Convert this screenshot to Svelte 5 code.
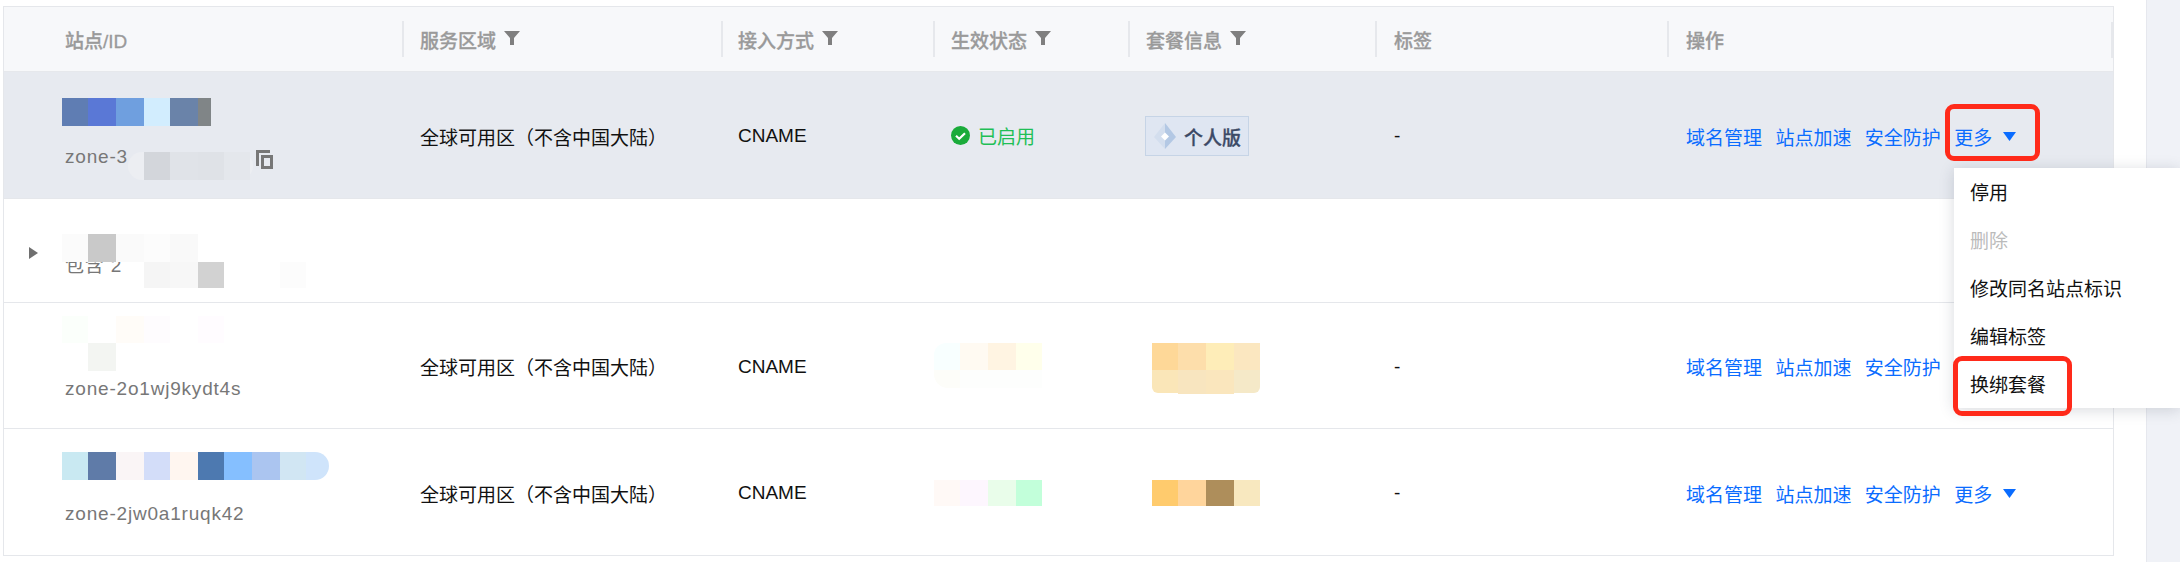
<script>
  const ORIGIN_X = 4;

  // censor mosaics, page x and y relative to the row they sit on
  const rows = [
    {
      id: "r1",
      top: 72,
      active: true,
      name: "zone-3",
      copy: true,
      region: "全球可用区（不含中国大陆）",
      access: "CNAME",
      status: "on",
      plan: "个人版",
      more: true,
      blocks: [
        [128, 152, 125, 28, "#eceef2", "14px"],
        [62, 98, 26, 28, "#5f7db3"],
        [88, 98, 28, 28, "#5a78d6"],
        [116, 98, 28, 28, "#6f9fdf"],
        [144, 98, 26, 28, "#d2edfe"],
        [170, 98, 28, 28, "#6a83a9"],
        [198, 98, 13, 28, "#808587"],
        [144, 152, 26, 28, "#d3d6db"],
        [170, 152, 28, 28, "#e0e3e8"],
        [198, 152, 26, 28, "#dfe2e7"],
        [224, 152, 26, 28, "#e4e7ec"],
      ],
    },
    {
      id: "r2",
      top: 199,
      expand: true,
      name: "包含 2",
      blocks: [
        [62, 234, 26, 28, "#fbfbfb"],
        [88, 234, 28, 28, "#c9c9c9"],
        [116, 234, 28, 28, "#fafafa"],
        [144, 234, 26, 28, "#fcfcfc"],
        [170, 234, 28, 28, "#f9f9f9"],
        [144, 262, 26, 26, "#f5f5f5"],
        [170, 262, 28, 26, "#f7f7f7"],
        [198, 262, 26, 26, "#d2d2d2"],
        [280, 262, 26, 26, "#fcfcfc"],
      ],
    },
    {
      id: "r3",
      top: 303,
      name: "zone-2o1wj9kydt4s",
      region: "全球可用区（不含中国大陆）",
      access: "CNAME",
      more: true,
      blocks: [
        [62, 316, 26, 27, "#fbfffb"],
        [116, 316, 28, 27, "#fffcf8"],
        [144, 316, 26, 27, "#fefcfe"],
        [198, 316, 26, 27, "#fffcff"],
        [88, 343, 28, 28, "#f3f5f2"],
        [934, 343, 26, 27, "#f8ffff", "12px 0 0 0"],
        [960, 343, 28, 27, "#fffaf2"],
        [988, 343, 28, 27, "#fff4e2"],
        [1016, 343, 26, 27, "#ffffeb"],
        [934, 370, 26, 18, "#fdfdf9", "0 0 0 14px"],
        [960, 370, 82, 18, "#fdfefd"],
        [1152, 343, 26, 27, "#fed898"],
        [1178, 343, 28, 27, "#fddeab"],
        [1206, 343, 28, 27, "#feedb8"],
        [1234, 343, 26, 27, "#fbe7c0"],
        [1152, 370, 26, 23, "#fae6b8", "0 0 0 6px"],
        [1178, 370, 28, 24, "#f8e5bf"],
        [1206, 370, 28, 24, "#fae6bd"],
        [1234, 370, 26, 23, "#f5e9c8", "0 0 6px 0"],
      ],
    },
    {
      id: "r4",
      top: 429,
      name: "zone-2jw0a1ruqk42",
      region: "全球可用区（不含中国大陆）",
      access: "CNAME",
      more: true,
      showMore: true,
      blocks: [
        [62, 452, 26, 28, "#c9e9f2"],
        [88, 452, 28, 28, "#5f7ba8"],
        [116, 452, 28, 28, "#faf5f6"],
        [144, 452, 26, 28, "#d3ddf9"],
        [170, 452, 28, 28, "#fff6f0"],
        [198, 452, 26, 28, "#4d79b0"],
        [224, 452, 28, 28, "#85bfff"],
        [252, 452, 28, 28, "#abc5f0"],
        [280, 452, 26, 28, "#d1e6f3"],
        [306, 452, 23, 28, "#cfe4fb", "0 14px 14px 0"],
        [934, 480, 26, 26, "#fff9f6"],
        [960, 480, 28, 26, "#fdf6fe"],
        [988, 480, 28, 26, "#e9fdea"],
        [1016, 480, 26, 26, "#c2ffda"],
        [1152, 480, 26, 26, "#ffcb6d"],
        [1178, 480, 28, 26, "#ffd59c"],
        [1206, 480, 28, 26, "#ae8e5b"],
        [1234, 480, 26, 26, "#f8e8bf"],
      ],
    },
  ];

  const headers = [
    { label: "服务区域", filter: true },
    { label: "接入方式", filter: true },
    { label: "生效状态", filter: true },
    { label: "套餐信息", filter: true },
    { label: "标签" },
    { label: "操作" },
  ];

  const actions = ["域名管理", "站点加速", "安全防护"];
  const menu = [
    { label: "停用" },
    { label: "删除", disabled: true },
    { label: "修改同名站点标识" },
    { label: "编辑标签" },
    { label: "换绑套餐" },
  ];

  function blockStyle(b, top) {
    return `left:${b[0] - ORIGIN_X}px;top:${b[1] - top}px;width:${b[2]}px;height:${b[3]}px;background:${b[4]};border-radius:${b[5] || 0}`;
  }
</script>

<div class="page">
  <main class="main">
    <div class="table">
      <div class="grid head">
        <div class="hcell first">站点/ID</div>
        {#each headers as h}
          <div class="hcell">
            {h.label}
            {#if h.filter}
              <svg class="filter" viewBox="0 0 16 14" width="16" height="14">
                <path d="M0 0h16L10 7v7H6V7z" fill="#7f7f7f" />
              </svg>
            {/if}
          </div>
        {/each}
        <span class="end-rule"></span>
      </div>

      {#each rows as row}
        <div class="grid row {row.id}" class:active={row.active}>
          <div class="cell site">
            {#if row.expand}
              <svg class="caret" viewBox="0 0 9 12" width="9" height="12">
                <path d="M0 0l9 6-9 6z" fill="#6f6f6f" />
              </svg>
            {/if}
            <span class="zone">{row.name}</span>
            {#if row.copy}
              <svg class="copy" viewBox="0 0 17 19" width="17" height="19">
                <path d="M0 0h14v3H3v13H0z" fill="#777" />
                <path fill-rule="evenodd" d="M5 5h12v14H5zM8 8v8h6V8z" fill="#777" />
              </svg>
            {/if}
          </div>
          <div class="cell">{row.region || ""}</div>
          <div class="cell">{row.access || ""}</div>
          <div class="cell">
            {#if row.status}
              <span class="status">
                <svg viewBox="0 0 19 19" width="19" height="19">
                  <circle cx="9.5" cy="9.5" r="9.5" fill="#1aab3a" />
                  <path d="M5 9.8l3.2 3 5.8-5.6" fill="none" stroke="#fff" stroke-width="2.2" />
                </svg>
                已启用
              </span>
            {/if}
          </div>
          <div class="cell">
            {#if row.plan}
              <span class="plan">
                <svg viewBox="0 0 22 26" width="22" height="26">
                  <path d="M11 0v26L0 14z" fill="#d3deee" />
                  <path d="M11 0l11 14-11 12z" fill="#b3c8e4" />
                  <path d="M11 9.5l4 4-4 4-4-4z" fill="#fff" />
                </svg>
                {row.plan}
              </span>
            {/if}
          </div>
          <div class="cell">{row.region ? "-" : ""}</div>
          <div class="cell actions">
            {#if row.region}
              {#each actions as a}
                <a href="#top">{a}</a>
              {/each}
              <a class="more" href="#top">
                更多
                <svg viewBox="0 0 13 9" width="13" height="9"><path d="M0 0h13L6.5 9z" fill="#0a6cff" /></svg>
              </a>
            {/if}
          </div>
          {#each row.blocks as b}
            <i class="block" style={blockStyle(b, row.top)}></i>
          {/each}
        </div>
      {/each}
    </div>
  </main>
  <aside class="side"></aside>

  <ul class="menu">
    {#each menu as item}
      <li class:disabled={item.disabled}>{item.label}</li>
    {/each}
  </ul>

  <span class="mark mark-more"></span>
  <span class="mark mark-rebind"></span>
</div>

<style>
  :global(body) {
    margin: 0;
    background: #fff;
    overflow: hidden;
  }

  .page {
    position: relative;
    display: flex;
    width: 2180px;
    height: 562px;
    overflow: hidden;
    font-family: "Liberation Sans", "Noto Sans CJK SC", sans-serif;
    font-size: 19px;
    color: #111;
  }

  .main {
    width: 2146px;
    padding: 6px 0 0 3px;
    box-sizing: border-box;
  }

  .side {
    flex: 1;
    background: #f0f2f7;
    border-left: 1px solid #e6e8ee;
  }

  .table {
    width: 2111px;
    border: 1px solid #e5e7eb;
    box-sizing: border-box;
    height: 550px;
  }

  .grid {
    position: relative;
    display: grid;
    grid-template-columns: 398px 319px 212px 195px 247px 292px 1fr;
    align-items: center;
    box-sizing: border-box;
  }

  .head {
    height: 65px;
    background: #f7f8fa;
    border-bottom: 1px solid #e6e8ec;
  }

  .hcell {
    display: flex;
    align-items: center;
    gap: 8px;
    height: 36px;
    padding-left: 16px;
    border-left: 2px solid #e6e8ec;
    color: #9a9a9a;
    font-weight: 500;
    -webkit-text-stroke: 0.3px #9a9a9a;
  }

  .hcell.first {
    border-left: none;
    padding-left: 61px;
  }

  .hcell:nth-child(3) { padding-left: 15px; }
  .hcell:nth-child(6),
  .hcell:nth-child(7) { padding-left: 17px; }

  .filter {
    margin-top: -2px;
  }

  .end-rule {
    position: absolute;
    right: 0;
    top: 15px;
    height: 36px;
    border-right: 2px solid #e6e8ec;
  }

  .row {
    border-bottom: 1px solid #e5e7eb;
  }

  .r1 { height: 127px; }
  .r2 { height: 104px; }
  .r3 { height: 126px; }
  .r4 { height: 126px; border-bottom: none; }

  .row.active {
    background: #e7eaf0;
  }

  .cell {
    padding-left: 18px;
    padding-top: 2px;
    white-space: nowrap;
  }

  .cell:nth-child(3) { padding-left: 17px; }
  .cell:nth-child(6),
  .cell:nth-child(7) { padding-left: 19px; }

  .site {
    position: relative;
    display: flex;
    align-items: center;
    align-self: start;
    padding-left: 61px;
    color: #777;
    letter-spacing: 0.8px;
  }

  .r1 .site { padding-top: 74px; }
  .r2 .site { padding-top: 51px; }
  .r3 .site { padding-top: 75px; }
  .r4 .site { padding-top: 74px; }

  .caret {
    position: absolute;
    left: 25px;
    top: 48px;
  }

  .copy {
    position: absolute;
    left: 252px;
    top: 78px;
  }

  .status {
    display: inline-flex;
    align-items: center;
    gap: 8px;
    color: #1fbf56;
  }

  .plan {
    display: inline-flex;
    align-items: center;
    gap: 8px;
    height: 40px;
    width: 104px;
    padding-left: 8px;
    margin-left: -1px;
    box-sizing: border-box;
    background: #dfe6f2;
    border: 1px solid #c6d4e6;
    color: #3c4a66;
    font-weight: 500;
    -webkit-text-stroke: 0.3px #3c4a66;
  }

  .actions {
    display: flex;
    align-items: center;
    gap: 13.4px;
  }

  .actions a {
    color: #0a6cff;
    text-decoration: none;
  }

  .more {
    display: inline-flex;
    align-items: center;
    gap: 11px;
  }

  .block {
    position: absolute;
    display: block;
  }

  .menu {
    position: absolute;
    left: 1954px;
    top: 168px;
    width: 226px;
    margin: 0;
    padding: 0;
    list-style: none;
    background: #fff;
    box-shadow: 0 2px 14px rgba(40, 50, 70, 0.18);
  }

  .menu li {
    display: flex;
    align-items: center;
    height: 48px;
    padding: 0 0 2px 16px;
    box-sizing: border-box;
    color: #111;
  }

  .menu li.disabled {
    color: #bbb;
  }

  .mark {
    position: absolute;
    box-sizing: border-box;
    border: 5px solid #ff2a1a;
    border-radius: 9px;
  }

  .mark-more {
    left: 1945px;
    top: 104px;
    width: 95px;
    height: 57px;
  }

  .mark-rebind {
    left: 1953px;
    top: 356px;
    width: 119px;
    height: 60px;
  }
</style>
